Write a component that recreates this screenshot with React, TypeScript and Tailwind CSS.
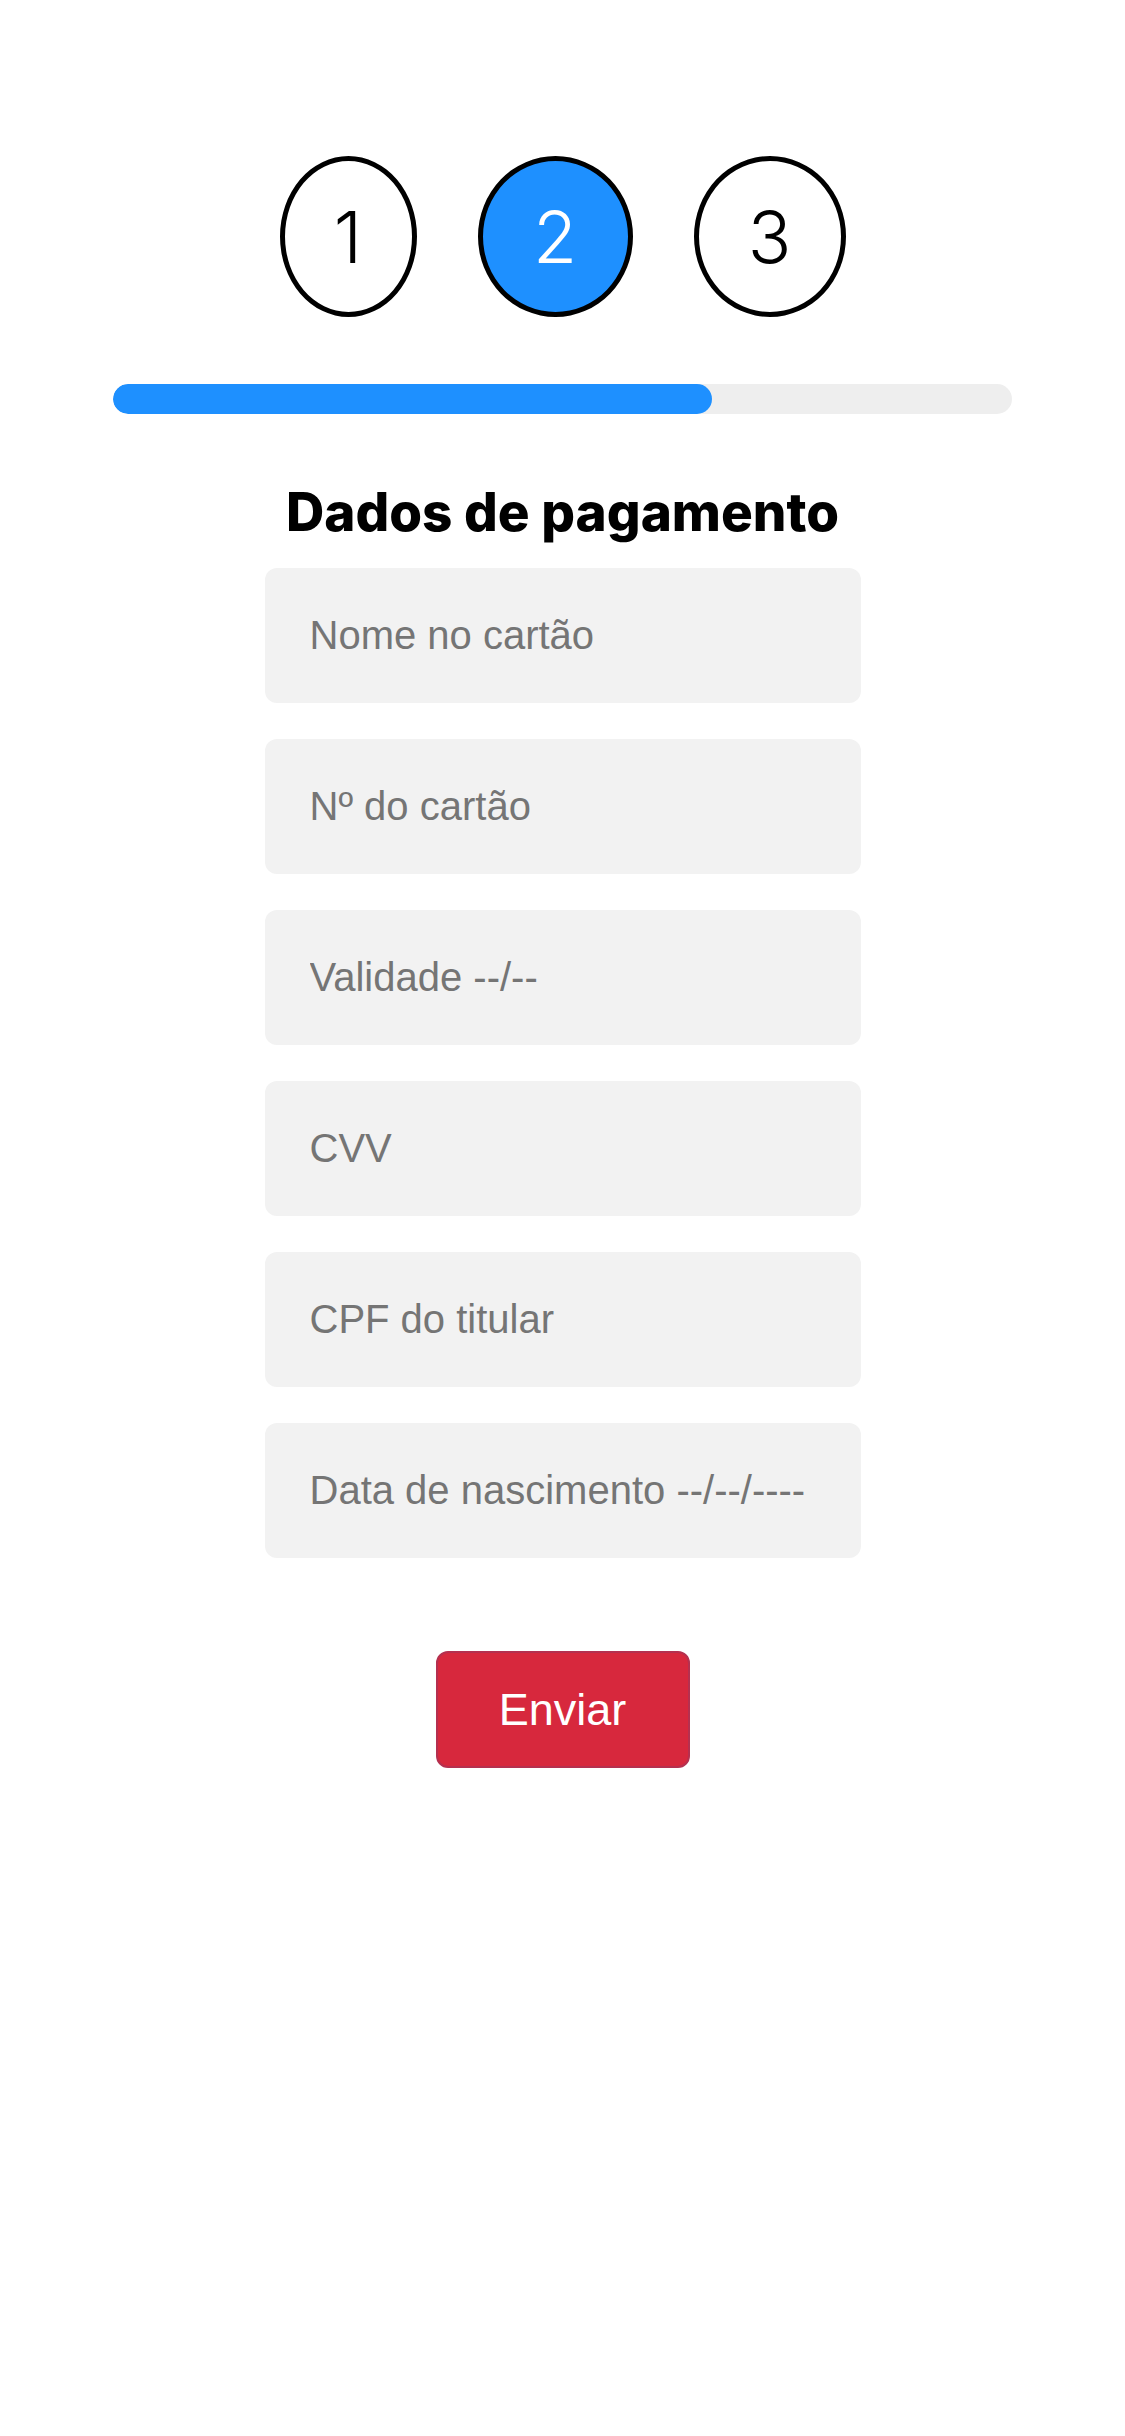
import React from 'react'

const steps = [
    { n: '1', w: 'w-[137px]', active: false },
    { n: '2', w: 'w-[155px]', active: true },
    { n: '3', w: 'w-[152px]', active: false },
]

const fields = [
    'Nome no cartão',
    'Nº do cartão',
    'Validade --/--',
    'CVV',
    'CPF do titular',
    'Data de nascimento --/--/----',
]

export default function App() {
    const progress = 66.6

    return (
        <div className="flex flex-col items-center w-full min-h-screen bg-white pt-[156px] pb-20">
            <div className="flex gap-[61px]">
                {steps.map((s) => (
                    <div
                        key={s.n}
                        className={`flex h-[161px] ${s.w} items-center justify-center rounded-[50%] border-[5px] border-black text-[72px] font-light font-['Inter',sans-serif] ${s.active ? 'bg-[#1e90ff] text-white' : 'bg-white text-black'}`}>
                        {s.n}
                    </div>
                ))}
            </div>

            <div className="mt-[67px] w-[899px] h-[30px] rounded-full bg-[#eeeeee] overflow-hidden">
                <div className="h-full rounded-full bg-[#1e90ff]" style={{ width: `${progress}%` }} />
            </div>

            <h1 className="mt-[68px] text-[53px] leading-[60px] font-extrabold text-black font-['Inter',sans-serif]">
                Dados de pagamento
            </h1>

            <form className="flex flex-col items-center mt-[26px]" onSubmit={(e) => e.preventDefault()}>
                <div className="flex flex-col gap-[36px]">
                    {fields.map((f) => (
                        <input
                            key={f}
                            type="text"
                            placeholder={f}
                            className="w-[596px] h-[135px] rounded-[12px] bg-[#f2f2f2] px-[45px] text-[40px] text-black placeholder:text-[#757575] font-['Liberation_Sans',Arial,sans-serif] outline-none"
                        />
                    ))}
                </div>

                <button
                    type="submit"
                    className="mt-[93px] w-[254px] h-[117px] rounded-[12px] border-2 border-[#b5304f] bg-[#d7283d] text-[45px] text-white font-['Liberation_Sans',Arial,sans-serif]">
                    Enviar
                </button>
            </form>
        </div>
    )
}
